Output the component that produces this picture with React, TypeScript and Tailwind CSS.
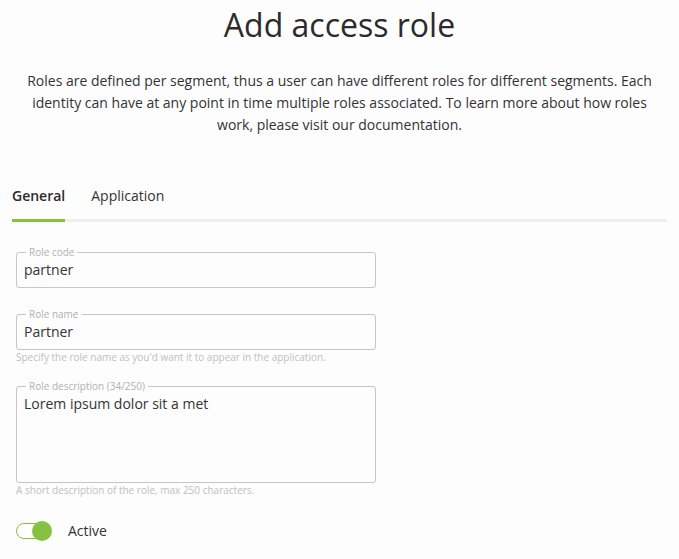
import React from "react";

function Field({
  label,
  value,
  helper,
  multiline,
}: {
  label: string;
  value: string;
  helper?: string;
  multiline?: boolean;
}) {
  return (
    <div className="w-[360px]">
      <div
        className={`relative rounded-[3px] border border-[#c6c6c6] pl-[7px] pt-[6px] ${
          multiline ? "h-[97px]" : "h-[36px]"
        }`}
      >
        <span className="absolute -top-[7px] left-[9px] bg-[#fdfdfd] px-[3px] text-[10px] leading-[12px] text-[#b0b0b0]">
          {label}
        </span>
        <div className="text-[14px] leading-[22px] text-[#333]">{value}</div>
      </div>
      {helper && (
        <div className="mt-[1px] text-[10px] leading-[12px] text-[#c0c0c0]">{helper}</div>
      )}
    </div>
  );
}

export default function App() {
  return (
    <div
      className="min-h-[559px] w-[679px] bg-[#fdfdfd] text-[#333]"
      style={{ fontFamily: '"Open Sans", sans-serif' }}
    >
      <h1 className="pt-[5px] text-center text-[32px] font-medium leading-[40px] text-[#2b2b2b]">
        Add access role
      </h1>
      <p className="mx-auto mt-[25px] w-[640px] text-center text-[14px] leading-[22px] text-[#333]">
        Roles are defined per segment, thus a user can have different roles for different segments. Each
        identity can have at any point in time multiple roles associated. To learn more about how roles
        work, please visit our documentation.
      </p>

      <div className="mx-[12px] mt-[49px]">
        <div className="flex gap-[26px] border-b-[3px] border-[#eeeeee]">
          <div className="-mb-[3px] border-b-[3px] border-[#86c140] pb-[12px] text-[14px] font-semibold leading-[22px] text-[#2b2b2b]">
            General
          </div>
          <div className="pb-[12px] text-[14px] leading-[22px] text-[#333]">Application</div>
        </div>
      </div>

      <div className="ml-[16px] mt-[30px] flex flex-col">
        <Field label="Role code" value="partner" />
        <div className="mt-[26px]">
          <Field
            label="Role name"
            value="Partner"
            helper="Specify the role name as you'd want it to appear in the application."
          />
        </div>
        <div className="mt-[23px]">
          <Field
            label="Role description (34/250)"
            value="Lorem ipsum dolor sit a met"
            helper="A short description of the role, max 250 characters."
            multiline
          />
        </div>
        <div className="mt-[24px] flex items-center">
          <div className="relative h-[20px] w-[36px]">
            <div className="absolute left-0 top-[2px] h-[16px] w-[32px] rounded-full border-[1.5px] border-[#86c140] bg-white" />
            <div className="absolute left-[16px] top-0 h-[20px] w-[20px] rounded-full bg-[#86c140]" />
          </div>
          <span className="ml-[16px] text-[14px] leading-[22px] text-[#333]">Active</span>
        </div>
      </div>
    </div>
  );
}
